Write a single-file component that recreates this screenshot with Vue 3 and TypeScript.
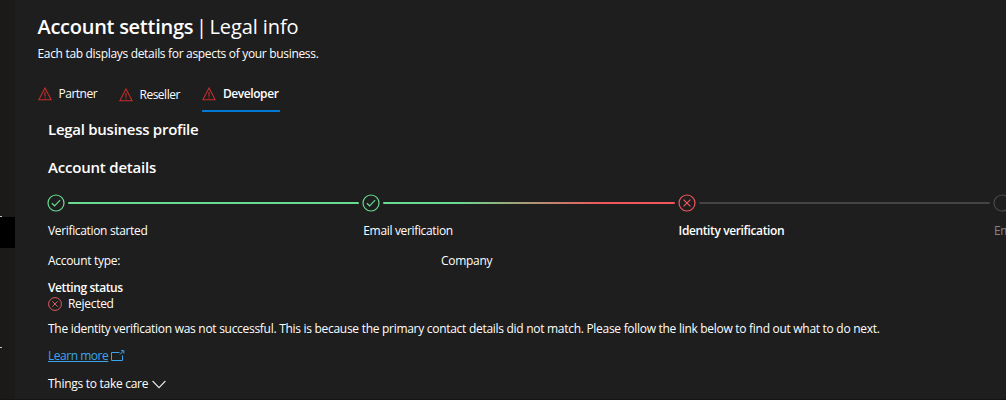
<script setup lang="ts">
type StepState = 'done' | 'failed' | 'pending'
interface Step { label: string; state: StepState; line: string }

const tabs: { name: string; active: boolean }[] = [
  { name: 'Partner', active: false },
  { name: 'Reseller', active: false },
  { name: 'Developer', active: true },
]

const steps: Step[] = [
  { label: 'Verification started', state: 'done', line: 'green' },
  { label: 'Email verification', state: 'done', line: 'blend' },
  { label: 'Identity verification', state: 'failed', line: 'grey' },
  { label: 'Employment verification', state: 'pending', line: 'grey' },
]
</script>

<template>
  <div class="page">
    <aside class="rail">
      <i class="dash first"></i>
      <div class="selected"></div>
      <i class="dash second"></i>
    </aside>
    <main class="main">
      <h1 class="title"><b>Account settings</b><span class="bar">|</span><span class="sub">Legal info</span></h1>
      <p class="intro">Each tab displays details for aspects of your business.</p>

      <nav class="tabs">
        <a v-for="tab in tabs" :key="tab.name" class="tab" :class="[tab.name.toLowerCase(), { active: tab.active }]">
          <svg class="warn" width="14" height="14" viewBox="0 0 14 14">
            <path d="M7 1 L13.2 12.8 H0.8 Z" />
            <path d="M7 5 V9.5 M7 10.5 V11.6" />
          </svg>
          <span>{{ tab.name }}</span>
        </a>
      </nav>

      <section class="profile">
        <h2 class="legal">Legal business profile</h2>
        <h2 class="details">Account details</h2>

        <div class="stepper">
          <div v-for="step in steps" :key="step.label" class="step" :class="step.state">
            <div class="track">
              <svg class="mark" width="18" height="18" viewBox="0 0 18 18">
                <circle cx="9" cy="9" r="8" />
                <path v-if="step.state === 'done'" d="M4.9 9.2 L7.6 11.8 L13.1 6.2" />
                <path v-if="step.state === 'failed'" d="M5.6 5.6 L12.4 12.4 M12.4 5.6 L5.6 12.4" />
              </svg>
              <span class="line" :class="step.line"></span>
            </div>
            <div class="label">{{ step.label }}</div>
          </div>
        </div>

        <div class="row type">
          <span class="key">Account type:</span>
          <span class="value">Company</span>
        </div>
        <div class="vetting">Vetting status</div>
        <div class="row status">
          <svg class="rejected" width="14" height="14" viewBox="0 0 14 14">
            <circle cx="7" cy="7" r="6.4" />
            <path d="M4.3 4.3 L9.7 9.7 M9.7 4.3 L4.3 9.7" />
          </svg>
          <span>Rejected</span>
        </div>
        <p class="message">The identity verification was not successful. This is because the primary contact details did not match. Please follow the link below to find out what to do next.</p>
        <div class="row learn">
          <a class="link">Learn more</a>
          <svg class="external" width="14" height="12" viewBox="0 0 14 12">
            <path d="M8.5 2.5 H0.5 V10.5 H11.5 V5.5 M9 4.4 L12.5 0.9 M10 0.6 H12.8 V3.4" />
          </svg>
        </div>
        <div class="row care">
          <span>Things to take care</span>
          <svg class="chevron" width="14" height="9" viewBox="0 0 14 9">
            <path d="M0.6 1 L7 7.6 L13.4 1" />
          </svg>
        </div>
      </section>
    </main>
  </div>
</template>

<style>
body { margin: 0; background: #1e1e1e; }
</style>

<style scoped>
.page {
  box-sizing: border-box;
  display: flex;
  width: 1006px;
  height: 400px;
  overflow: hidden;
  border-bottom: 1px solid #171216;
  background: #1e1e1e;
  color: #fff;
  font: 12px/18px "Segoe UI", "Open Sans", "Noto Sans", sans-serif;
  letter-spacing: -0.3px;
  white-space: nowrap;
}
.rail { flex: none; width: 15px; background: #1b1a19; }
.dash { display: block; width: 2px; height: 1px; background: #c8c8c8; }
.dash.first { margin-top: 216px; }
.selected { height: 31px; background: #000; }
.dash.second { margin-top: 99px; }
.main { flex: 1; min-width: 0; padding-left: 22.5px; overflow: hidden; }
h1, h2, p { margin: 0; font-weight: 400; }
.title { display: flex; height: 30px; margin-top: 12px; font-size: 20px; line-height: 30px; letter-spacing: 0; }
.title b { width: 156px; font-weight: 600; letter-spacing: -0.27px; }
.bar { width: 16px; text-align: center; }
.sub { letter-spacing: -0.1px; }
.intro { height: 18px; margin-top: 3px; letter-spacing: -0.32px; }
.tabs { display: flex; height: 34px; margin-top: 15px; }
.tab { display: flex; flex: none; align-items: center; box-sizing: border-box; height: 34px; padding-bottom: 1px; gap: 7px; letter-spacing: -0.5px; }
.tab.partner { width: 81px; padding-bottom: 2px; }
.tab.reseller { width: 83px; }
.tab.developer { width: 78px; gap: 7.5px; }
.tab.active { border-bottom: 2px solid #0078d4; padding-bottom: 0; font-weight: 600; letter-spacing: -0.43px; }
.warn { flex: none; fill: none; stroke: #c92c2c; stroke-width: 1.1; }
.profile { padding-left: 10.5px; }
h2 { height: 22px; font-size: 15px; line-height: 22px; font-weight: 600; }
.legal { margin-top: 6px; letter-spacing: -0.27px; }
.details { margin-top: 16px; letter-spacing: -0.2px; }
.stepper { display: flex; height: 46px; margin-top: 16px; }
.step { flex: none; width: 315.3px; }
.track { display: flex; align-items: center; height: 18px; margin-left: -1px; }
.mark { flex: none; fill: none; stroke: #68db90; stroke-width: 1.2; }
.failed .mark { stroke: #f0565b; }
.pending .mark { stroke: #484848; }
.line { flex: 1; height: 2px; margin: 0 4px 0 3px; border-radius: 1px; }
.green { background: #68db90; }
.blend { background: linear-gradient(90deg, #68db90 25%, #f0565b 75%); }
.grey { background: #444; }
.label { margin-top: 10px; letter-spacing: -0.34px; }
.failed .label { font-weight: 600; letter-spacing: -0.38px; }
.pending .label { color: #858585; }
.row { display: flex; align-items: center; height: 18px; }
.type { margin-top: 12px; }
.key { width: 393px; }
.vetting { margin-top: 9px; font-weight: 600; letter-spacing: -0.4px; }
.status { margin-top: -2px; gap: 6.5px; }
.rejected { margin-left: -0.5px; fill: none; stroke: #dc5c60; stroke-width: 1; }
.message { margin-top: 7px; letter-spacing: -0.288px; }
.learn { margin-top: 9px; gap: 3px; letter-spacing: -0.48px; }
.link { color: #3aa5ee; text-decoration: underline; }
.external { margin-left: -0.5px; fill: none; stroke: #3aa5ee; stroke-width: 1; }
.care { margin-top: 10px; gap: 3.5px; letter-spacing: -0.28px; }
.chevron { fill: none; stroke: #e8e8e8; stroke-width: 1.1; }
</style>
